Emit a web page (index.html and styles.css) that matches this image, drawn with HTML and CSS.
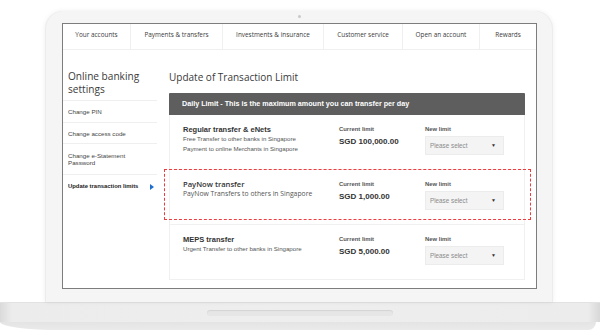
FILE: index.html
```html
<!DOCTYPE html>
<html lang="en">
<head>
    <meta charset="UTF-8">
    <meta name="viewport" content="width=device-width, initial-scale=1.0">
    <title>Update of Transaction Limit</title>
    <link rel="stylesheet" href="styles.css">
</head>
<body>
    <div class="laptop">
        <div class="lid">
            <div class="camera"></div>
            <div class="screen">
                <nav class="top-nav">
                    <a>Your accounts</a>
                    <a>Payments &amp; transfers</a>
                    <a>Investments &amp; insurance</a>
                    <a>Customer service</a>
                    <a>Open an account</a>
                    <a>Rewards</a>
                </nav>

                <div class="page">
                    <aside class="sidebar">
                        <h2>Online banking settings</h2>
                        <ul>
                            <li>Change PIN</li>
                            <li>Change access code</li>
                            <li>Change e-Statement Password</li>
                            <li class="active">Update transaction limits</li>
                        </ul>
                    </aside>

                    <main class="content">
                        <h1>Update of Transaction Limit</h1>
                        <div class="limit-bar">Daily Limit - This is the maximum amount you can transfer per day</div>

                        <div class="limit-row">
                            <div class="limit-info">
                                <h3>Regular transfer &amp; eNets</h3>
                                <p>Free Transfer to other banks in Singapore</p>
                                <p>Payment to online Merchants in Singapore</p>
                            </div>
                            <div class="limit-current">
                                <span class="label">Current limit</span>
                                <strong>SGD 100,000.00</strong>
                            </div>
                            <div class="limit-new">
                                <span class="label">New limit</span>
                                <div class="select">Please select<span class="caret">▼</span></div>
                            </div>
                        </div>

                        <div class="limit-row highlight">
                            <div class="limit-info paynow">
                                <h3>PayNow transfer</h3>
                                <p>PayNow Transfers to others in Singapore</p>
                            </div>
                            <div class="limit-current">
                                <span class="label">Current limit</span>
                                <strong>SGD 1,000.00</strong>
                            </div>
                            <div class="limit-new">
                                <span class="label">New limit</span>
                                <div class="select">Please select<span class="caret">▼</span></div>
                            </div>
                        </div>

                        <div class="limit-row">
                            <div class="limit-info">
                                <h3>MEPS transfer</h3>
                                <p>Urgent Transfer to other banks in Singapore</p>
                            </div>
                            <div class="limit-current">
                                <span class="label">Current limit</span>
                                <strong>SGD 5,000.00</strong>
                            </div>
                            <div class="limit-new">
                                <span class="label">New limit</span>
                                <div class="select">Please select<span class="caret">▼</span></div>
                            </div>
                        </div>
                    </main>
                </div>
            </div>
        </div>
        <div class="base">
            <div class="notch"></div>
        </div>
        <div class="base-lip"></div>
    </div>
</body>
</html>
```

FILE: styles.css
```css
* {
    margin: 0;
    padding: 0;
    box-sizing: border-box;
}

body {
    font-family: 'Liberation Sans', Arial, sans-serif;
    background: #ffffff;
    color: #333;
    width: 600px;
    height: 331px;
    overflow: hidden;
}

.laptop {
    padding-top: 11px;
}

/* Lid + screen */
.lid {
    position: relative;
    width: 508px;
    height: 291px;
    margin-left: 45px;
    padding: 12px 16px 0 17px;
    background: #f5f5f5;
    border-radius: 18px 18px 0 0;
    box-shadow: 0 0 5px rgba(0, 0, 0, 0.07), inset 1px 0 0 #ececec, inset -1px 0 0 #ececec;
}

.camera {
    position: absolute;
    top: 4px;
    left: 253px;
    width: 3px;
    height: 3px;
    border-radius: 50%;
    background: #c9c9c9;
}

.screen {
    width: 475px;
    height: 266px;
    background: #fff;
    border: 1px solid #7d7d7d;
    overflow: hidden;
}

.top-nav {
    display: grid;
    grid-template-columns: 67px 92px 101px 79px 77px 1fr;
    height: 26px;
    border-bottom: 1px solid #f0f0f0;
}

.top-nav a {
    font-family: 'Open Sans', sans-serif;
    font-size: 6.4px;
    color: #3c3c3c;
    text-align: center;
    padding-top: 6px;
    border-left: 1px solid #f0f0f0;
}

.top-nav a:first-child {
    border-left: none;
}

.page {
    display: grid;
    grid-template-columns: 94px 1fr;
}

/* Sidebar */
.sidebar {
    padding-top: 20px;
}

.sidebar h2 {
    font-family: 'Open Sans', sans-serif;
    font-weight: 400;
    font-size: 10.1px;
    line-height: 13px;
    color: #3a3a3a;
    padding: 0 6px 4px 5px;
}

.sidebar ul {
    list-style: none;
}

.sidebar li {
    position: relative;
    font-size: 6.2px;
    line-height: 7px;
    color: #444;
    padding: 7px 8px 7px 5px;
    border-top: 1px solid #efefef;
}

.sidebar li:nth-child(2) {
    padding-top: 7px;
    padding-bottom: 6px;
}

.sidebar li:nth-child(3) {
    padding-top: 8px;
    padding-bottom: 8px;
}

.sidebar li.active {
    font-weight: bold;
    font-size: 5.9px;
    color: #222;
    padding-top: 8px;
}

.sidebar li.active::after {
    content: '';
    position: absolute;
    right: 3px;
    top: 9px;
    border-left: 4px solid #1f6fd1;
    border-top: 3px solid transparent;
    border-bottom: 3px solid transparent;
}

/* Main content */
.content {
    padding: 20px 11px 0 12px;
}

.content h1 {
    font-family: 'Open Sans', sans-serif;
    font-weight: 400;
    font-size: 10px;
    line-height: 14px;
    color: #3a3a3a;
    margin-bottom: 9px;
}

.limit-bar {
    height: 22px;
    background: #5e5e5e;
    color: #fff;
    font-size: 7.2px;
    font-weight: bold;
    line-height: 22px;
    padding-left: 13px;
    border-radius: 1px 1px 0 0;
}

.limit-row {
    position: relative;
    display: grid;
    grid-template-columns: 156px 86px 79px;
    height: 55px;
    padding: 10px 0 0 13px;
    border: 1px solid #f0f0f0;
    border-top: none;
}

.limit-row.highlight::after {
    content: '';
    position: absolute;
    top: -1px;
    bottom: 4px;
    left: -6px;
    right: -7px;
    border: 1px dashed #ef3b3f;
}

.limit-info h3 {
    font-size: 7.5px;
    font-weight: bold;
    line-height: 9px;
    color: #333;
}

.limit-info p {
    font-size: 6.1px;
    line-height: 10px;
    color: #555;
}

.limit-info.paynow h3 {
    font-family: 'Open Sans', sans-serif;
    font-weight: 600;
    font-size: 7.6px;
}

.limit-info.paynow p {
    font-family: 'Open Sans', sans-serif;
    font-size: 6.8px;
}

.label {
    display: block;
    font-size: 5.9px;
    font-weight: bold;
    line-height: 9px;
    color: #555;
}

.limit-current strong {
    display: block;
    font-size: 8px;
    line-height: 12px;
    margin-top: 2px;
    color: #333;
}

.select {
    position: relative;
    height: 19px;
    margin-top: 2px;
    padding-left: 4px;
    background: #f4f4f4;
    border: 1px solid #ececec;
    font-size: 6.3px;
    line-height: 17px;
    color: #8a8a8a;
}

.caret {
    position: absolute;
    right: 7px;
    top: 0;
    font-size: 5px;
    color: #333;
}

/* Base */
.base {
    display: flex;
    justify-content: center;
    align-items: flex-start;
    height: 20px;
    background: linear-gradient(to right, #dadada 0, #ececec 12px, #eeeeee 50%, #ececec calc(100% - 12px), #d8d8d8 100%);
    border-top: 1px solid #e2e2e2;
}

.notch {
    width: 186px;
    height: 6px;
    margin-top: 7px;
    border-radius: 3px;
    background: #e6e6e6;
    box-shadow: inset 0 1px 1px rgba(0, 0, 0, 0.08);
}

.base-lip {
    height: 8px;
    margin: 0 4px 0 0;
    background: linear-gradient(#e4e4e4, #eaeaea);
    border-radius: 0 0 8px 60px / 0 0 8px 8px;
}
```
